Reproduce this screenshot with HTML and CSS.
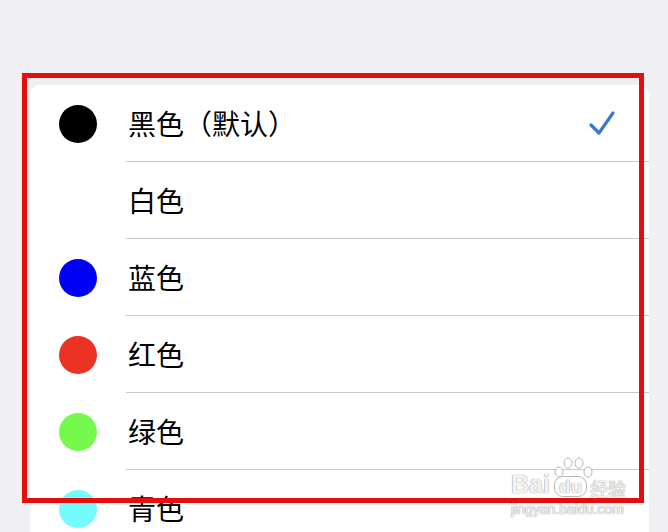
FILE: index.html
```html
<!DOCTYPE html>
<html lang="zh-CN">
<head>
    <meta charset="UTF-8">
    <meta name="viewport" content="width=device-width, initial-scale=1.0">
    <title>颜色</title>
    <link rel="stylesheet" href="styles.css">
</head>
<body>
    <div class="card">
        <div class="row">
            <span class="dot dot-black"></span>
            <div class="label">
                <span>黑色（默认）</span>
                <svg class="check" width="28" height="26" viewBox="0 0 28 26">
                    <path d="M3 15 L11 23 L25 3" fill="none" stroke="#3a78d6" stroke-width="3.2" stroke-linecap="round" stroke-linejoin="round"/>
                </svg>
            </div>
        </div>
        <div class="row">
            <span class="dot"></span>
            <div class="label"><span>白色</span></div>
        </div>
        <div class="row">
            <span class="dot dot-blue"></span>
            <div class="label"><span>蓝色</span></div>
        </div>
        <div class="row">
            <span class="dot dot-red"></span>
            <div class="label"><span>红色</span></div>
        </div>
        <div class="row">
            <span class="dot dot-green"></span>
            <div class="label"><span>绿色</span></div>
        </div>
        <div class="row">
            <span class="dot dot-cyan"></span>
            <div class="label"><span>青色</span></div>
        </div>
    </div>

    <!-- highlight frame drawn over the list -->
    <div class="frame"></div>

    <div class="watermark">
        <div class="wm-logo">
            <span>Bai</span>
            <span class="wm-du">
                <svg class="wm-paw" width="40" height="22" viewBox="0 0 40 22">
                    <g fill="rgba(255,255,255,0.85)" stroke="#b8b8b8" stroke-width="1">
                        <ellipse cx="6" cy="15" rx="4" ry="5"/>
                        <ellipse cx="15" cy="6" rx="4" ry="5"/>
                        <ellipse cx="26" cy="6" rx="4" ry="5"/>
                        <ellipse cx="35" cy="15" rx="4" ry="5"/>
                    </g>
                </svg>du
            </span>
            <span class="wm-cn">经验</span>
        </div>
        <div class="wm-url">jingyan.baidu.com</div>
    </div>
</body>
</html>
```

FILE: styles.css
```css
body {
    margin: 0;
    padding: 0;
    background-color: #efeff4;
    font-family: "Noto Sans CJK SC", "Noto Sans", sans-serif;
    color: #000;
    overflow: hidden;
    height: 532px;
}

.card {
    margin: 85px 0 0 30px;
    width: 619px;
    background: #fff;
    border-radius: 10px 10px 0 0;
}

.row {
    display: flex;
    align-items: center;
    height: 77px;
}

.dot {
    width: 38px;
    height: 38px;
    border-radius: 50%;
    margin: 0 29px 0 29px;
    flex-shrink: 0;
}

.dot-black { background-color: #000; }
.dot-blue { background-color: #0000f5; }
.dot-red { background-color: #eb3324; }
.dot-green { background-color: #75f94c; }
.dot-cyan { background-color: #73fbfd; }

.label {
    flex: 1;
    height: 76px;
    display: flex;
    align-items: center;
    justify-content: space-between;
    border-bottom: 1px solid #c8c8cc;
    padding-left: 2px;
    font-size: 28px;
    line-height: 1;
}

.check {
    margin-right: 33px;
}

.frame {
    position: absolute;
    left: 22px;
    top: 73px;
    width: 622px;
    height: 430px;
    box-sizing: border-box;
    border: 5px solid #e60d0d;
}

.watermark {
    position: absolute;
    left: 511px;
    top: 472px;
    color: rgba(255, 255, 255, 0.9);
    text-shadow: 0 0 1px #999, 0 0 1px #999;
    font-family: "Liberation Sans", sans-serif;
}

.wm-logo {
    display: flex;
    align-items: flex-end;
    font-size: 25px;
    font-weight: bold;
    line-height: 1;
}

.wm-du {
    position: relative;
    font-size: 19px;
    margin-left: 4px;
    padding: 0 4px;
    border: 1px solid #b8b8b8;
    border-radius: 9px;
}

.wm-paw {
    position: absolute;
    left: -2px;
    top: -20px;
}

.wm-cn {
    font-family: "Noto Sans CJK SC", sans-serif;
    font-size: 18px;
    font-weight: normal;
    margin-left: 3px;
}

.wm-url {
    font-size: 14px;
    margin-top: 4px;
}
```
